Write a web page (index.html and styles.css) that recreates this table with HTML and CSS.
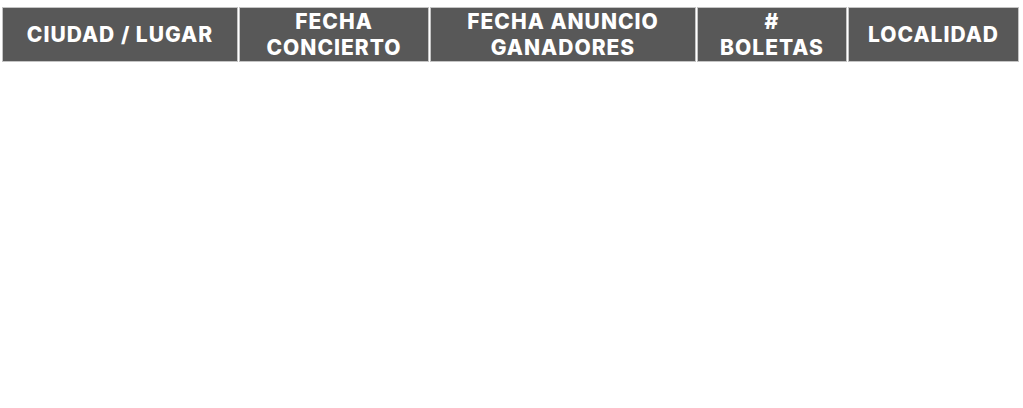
FILE: index.html
```html
<!DOCTYPE html>
<html lang="es">
<head>
<meta charset="utf-8">
<link rel="stylesheet" href="styles.css">
</head>
<body>
<table class="grid">
  <thead>
    <tr>
      <th class="c1">CIUDAD / LUGAR</th>
      <th class="c2">FECHA<br>CONCIERTO</th>
      <th class="c3">FECHA ANUNCIO<br>GANADORES</th>
      <th class="c4">#<br>BOLETAS</th>
      <th class="c5">LOCALIDAD</th>
    </tr>
  </thead>
</table>
</body>
</html>
```
FILE: styles.css
```css
html, body {
  margin: 0;
  padding: 0;
  background: #ffffff;
}
.grid {
  margin: 6px 0 0 1px;
  width: 1019px;
  table-layout: fixed;
  border-collapse: separate;
  border-spacing: 1px;
}
.grid th {
  box-sizing: border-box;
  height: 55px;
  padding: 0;
  background: #585858;
  border: 1px solid #c4c4c4;
  color: #ffffff;
  font-family: "Inter", "Liberation Sans", sans-serif;
  font-weight: 800;
  font-size: 21px;
  line-height: 26px;
  text-align: center;
  vertical-align: middle;
  letter-spacing: 1px;
}
.c1 { width: 236px; }
.c2 { width: 190px; }
.c3 { width: 266px; }
.c4 { width: 150px; }
.c5 { width: 171px; }
```
